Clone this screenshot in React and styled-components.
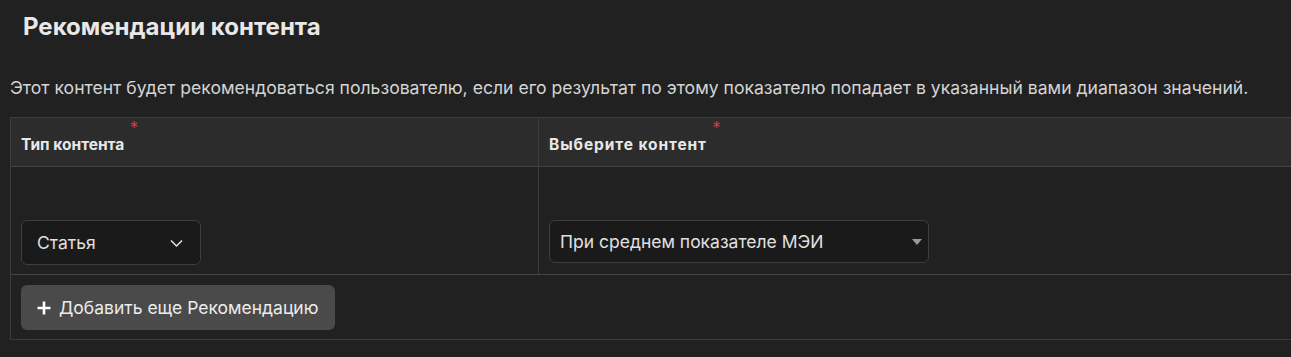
import React from "react";
import styled, { createGlobalStyle } from "styled-components";

const GlobalStyle = createGlobalStyle`
  body {
    margin: 0;
    background: #212121;
    font-family: Inter, "Noto Sans", sans-serif;
    overflow: hidden;
  }
`;

export default function App() {
  return (
    <>
      <GlobalStyle />
      <Page>
        <Title>Рекомендации контента</Title>
        <Description>
          Этот контент будет рекомендоваться пользователю, если его результат по этому показателю
          попадает в указанный вами диапазон значений.
        </Description>
        <Table>
          <HeaderRow>
            <HeadCell>
              <HeadLabel>
                Тип контента<Required>*</Required>
              </HeadLabel>
            </HeadCell>
            <HeadCell>
              <HeadLabel $wide>
                Выберите контент<Required>*</Required>
              </HeadLabel>
            </HeadCell>
          </HeaderRow>
          <BodyRow>
            <BodyCell>
              <Select $width="180px">
                <span>Статья</span>
                <svg width="13" height="14" viewBox="0 0 13 14">
                  <path d="M1 4.5l5.5 5.5L12 4.5" fill="none" stroke="#e6e6e6" strokeWidth="1.5" />
                </svg>
              </Select>
            </BodyCell>
            <BodyCell>
              <Select $width="380px" $compact>
                <span>При среднем показателе МЭИ</span>
                <svg width="10" height="6" viewBox="0 0 10 6">
                  <path d="M0 0h10L5 6z" fill="#9a9a9a" />
                </svg>
              </Select>
            </BodyCell>
          </BodyRow>
          <FooterRow>
            <AddButton>
              <svg width="14" height="14" viewBox="0 0 14 14">
                <path d="M7 0.5v13M0.5 7h13" stroke="#fff" strokeWidth="2.6" />
              </svg>
              Добавить еще Рекомендацию
            </AddButton>
          </FooterRow>
        </Table>
      </Page>
    </>
  );
}

const Page = styled.div`
  padding: 0 0 0 10px;
  color: #e4e4e4;
`;

const Title = styled.h2`
  margin: 0;
  padding: 13px 0 0 13px;
  font-size: 24px;
  line-height: 28px;
  font-weight: 700;
  color: #e8e8e8;
`;

const Description = styled.p`
  margin: 36px 0 0;
  font-size: 17.6px;
  line-height: 22px;
  color: #d4d4d4;
  white-space: nowrap;
`;

const Table = styled.div`
  margin-top: 18px;
  width: 1320px;
  border: 1px solid #3c3c3c;
`;

const HeaderRow = styled.div`
  display: grid;
  grid-template-columns: 527px 1fr;
  height: 48px;
  background: #2c2c2c;
  border-bottom: 1px solid #444;
`;

const HeadCell = styled.div`
  display: flex;
  align-items: center;
  padding: 0 10px;
  & + & {
    border-left: 1px solid #3c3c3c;
  }
`;

const HeadLabel = styled.span`
  position: relative;
  top: 2px;
  font-size: 15.5px;
  letter-spacing: ${(p) => (p.$wide ? "0.9px" : "0")};
  font-weight: 700;
  color: #e8e8e8;
`;

const Required = styled.sup`
  position: absolute;
  top: -17px;
  right: -14px;
  color: #d9363e;
  font-size: 17px;
  font-weight: 400;
  letter-spacing: 0;
`;

const BodyRow = styled.div`
  display: grid;
  grid-template-columns: 527px 1fr;
  height: 107px;
  border-bottom: 1px solid #444;
`;

const BodyCell = styled.div`
  display: flex;
  align-items: flex-end;
  padding: 0 10px 9px;
  & + & {
    border-left: 1px solid #3c3c3c;
  }
`;

const Select = styled.div`
  box-sizing: border-box;
  width: ${(p) => p.$width};
  height: ${(p) => (p.$compact ? "43px" : "45px")};
  margin-bottom: ${(p) => (p.$compact ? "2px" : "0")};
  display: flex;
  align-items: center;
  justify-content: space-between;
  padding: ${(p) => (p.$compact ? "0 6px 0 10px" : "0 17px 0 15px")};
  background: #1a1a1a;
  border: 1px solid #3e3e3e;
  border-radius: 6px;
  font-size: 17.5px;
  color: #e0e0e0;
`;

const FooterRow = styled.div`
  padding: 10px 10px 9px;
`;

const AddButton = styled.button`
  display: inline-flex;
  align-items: center;
  gap: 8px;
  height: 45px;
  padding: 0 17px 0 16px;
  background: #4a4a4a;
  border: none;
  border-radius: 6px;
  font-family: Inter, "Noto Sans", sans-serif;
  font-size: 17.5px;
  color: #ececec;
`;
